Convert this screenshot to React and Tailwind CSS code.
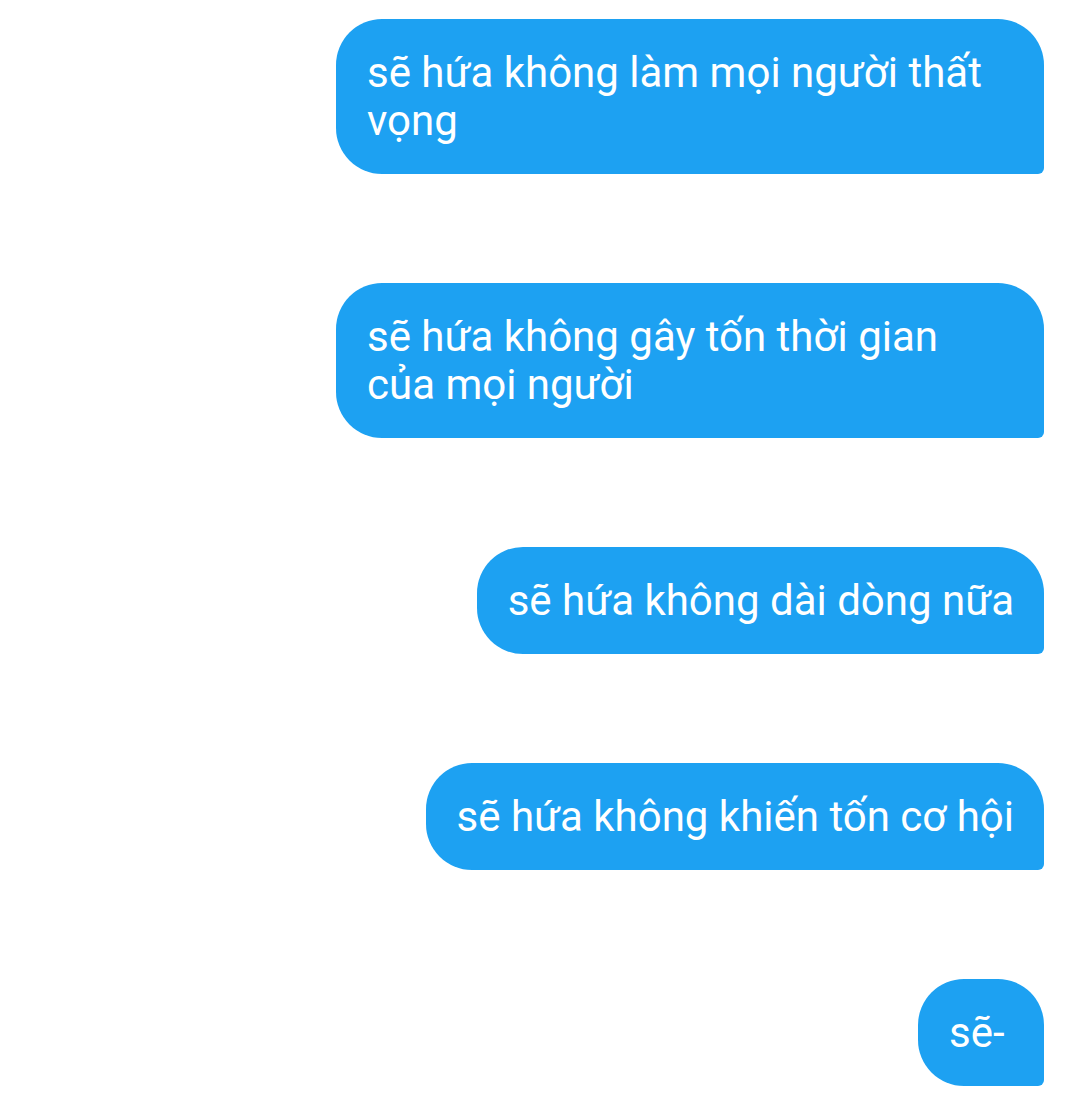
import React from "react";

const messages = [
  "sẽ hứa không làm mọi người thất vọng",
  "sẽ hứa không gây tốn thời gian của mọi người",
  "sẽ hứa không dài dòng nữa",
  "sẽ hứa không khiến tốn cơ hội",
  "sẽ-",
];

const Bubble = ({ text }) => (
  <div className="min-w-[126px] max-w-[708px] rounded-[46px] rounded-br-[6px] bg-[#1da1f2] pb-[29px] pl-[31px] pr-[30px] pt-[30px] text-[42px] leading-[48px] text-white">
    {text}
  </div>
);

export default function App() {
  return (
    <div
      className="flex min-h-[1096px] w-[1080px] flex-col items-end gap-[109px] bg-white pr-[36px] pt-[19px]"
      style={{ fontFamily: "Roboto, 'Noto Sans', sans-serif" }}
    >
      {messages.map((m, i) => (
        <Bubble key={i} text={m} />
      ))}
    </div>
  );
}
